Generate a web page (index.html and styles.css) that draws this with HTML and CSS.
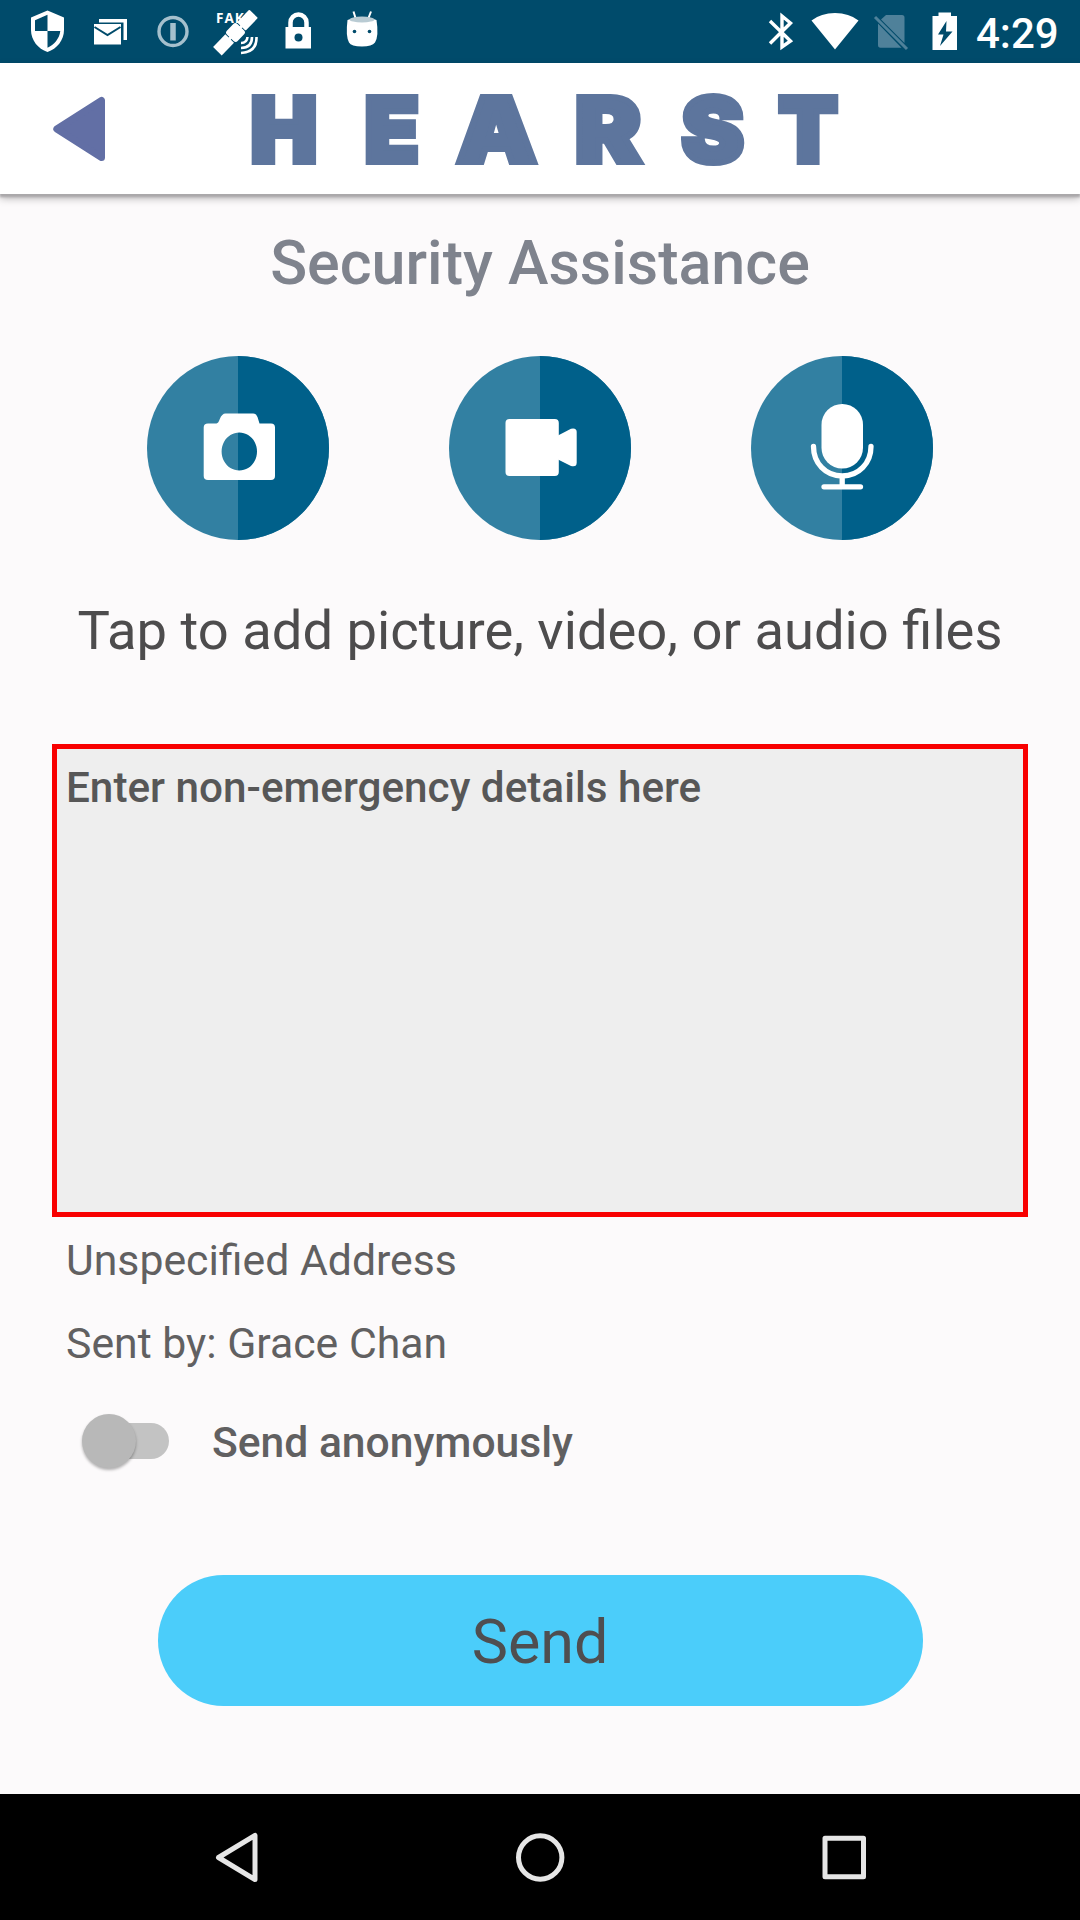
FILE: index.html
```html
<!DOCTYPE html>
<html lang="en">
<head>
<meta charset="utf-8">
<title>Security Assistance</title>
<link rel="stylesheet" href="styles.css">
</head>
<body>
<div class="screen">
  <div class="status">
    <svg class="status-icons" width="400" height="63" viewBox="0 0 400 63" fill="#fff">
      <!-- shield -->
      <path fill-rule="evenodd" d="M47.500 10.500L64 17.500V30C64 40 57 49 47.500 52C38 49 31 40 31 30V17.500ZM47.500 14.800L35 20.300V31H47.500ZM47.500 31V47.800C54 45 59.500 38.500 60.300 31Z"/>
      <!-- stacked mail -->
      <path d="M99 19H127V40H123.500V22.500H99Z"/>
      <path d="M94 24H121V44.500H94Z"/>
      <path d="M94.500 27L107.500 35L120.500 27" fill="none" stroke="#004b6b" stroke-width="2"/>
      <!-- round key badge -->
      <g fill="none" stroke="#a5c0cd"><circle cx="173" cy="31.500" r="14" stroke-width="3.400"/><path d="M173 23V40.500" stroke-width="5.500"/></g>
      <!-- satellite -->
      <text class="fake" x="216" y="23">FAKE</text>
      <g transform="translate(235.500 32.500) rotate(-46) scale(.93 1)"><rect x="-28" y="-6" width="19" height="12"/><rect x="-8" y="-7.500" width="16" height="15" rx="3"/><rect x="9" y="-6" width="19" height="12" rx="1"/><path d="M-10 -1.500H10V1.500H-10Z"/></g>
      <g fill="none" stroke="#fff" stroke-width="2.600"><path d="M241 43Q247 43 247.500 37"/><path d="M241 48Q252 48 252 37"/><path d="M241 53Q257 52 256.500 37"/></g>
      <!-- padlock -->
      <path d="M290.500 28V22.500A8 8 0 0 1 306.500 22.500V28" fill="none" stroke="#fff" stroke-width="4.500"/>
      <rect x="285.500" y="27" width="25.500" height="21.500"/><circle cx="298.500" cy="37.500" r="4" fill="#004b6b"/>
      <!-- android head -->
      <path d="M355.500 18L353.500 11.500M368.500 18L371 11.500" stroke="#fff" stroke-width="2" fill="none"/>
      <path d="M347.500 20Q362 14 376.500 20Q379 36 375 42.500Q372 46.500 362 46.500Q351 46.500 349 42.500Q345.500 36 347.500 20Z"/>
      <ellipse cx="362" cy="19.500" rx="12.500" ry="3" fill="#b9cbd3"/>
      <circle cx="354.500" cy="31.500" r="1.800" fill="#004b6b"/><circle cx="369.500" cy="31.500" r="1.800" fill="#004b6b"/>
    </svg>
    <svg class="status-icons" width="220" height="63" viewBox="750 0 220 63" fill="#fff">
      <path d="M770 21L790.500 41L782 47V16L790.500 23L770 43.500" fill="none" stroke="#fff" stroke-width="3.400"/>
      <path d="M835 49.500L811.500 20.500Q821 13 835 13Q849 13 858.500 20.500Z"/>
      <path d="M886 15H902Q904.500 15 904.500 17.500V43L881 19.500ZM878 23.500L901.500 47.700H880.500Q878 47.700 878 45Z" fill="#4f819a"/>
      <path d="M878 21L905 48" stroke="#004b6b" stroke-width="3"/>
      <path d="M875 17L907 49" stroke="#4f819a" stroke-width="3"/>
      <path fill-rule="evenodd" d="M938.500 12.500H951V16H957V50H932.500V16H938.500ZM946.500 21L938 34.500H943.500L940 46L952.500 31.500H946Z"/>
    </svg>
    <span class="clock">4:29</span>
  </div>
  <header class="header">
    <svg width="1080" height="131" viewBox="0 63 1080 131">
      <path d="M56.800 129L101.500 100.500V157.500Z" fill="#626fa5" stroke="#626fa5" stroke-width="7" stroke-linejoin="round"/>
      <g class="logo">
        <text transform="translate(250.500 162)">H</text>
        <text transform="translate(364.500 162)">E</text>
        <text transform="translate(457 162) scale(1.120 1)">A</text>
        <text transform="translate(575 162) scale(1.110 1)">R</text>
        <text transform="translate(681.500 162) scale(1.050 1)">S</text>
        <text transform="translate(778.500 162) scale(.970 1)">T</text>
      </g>
    </svg>
  </header>
  <main class="content">
    <h1 class="title">Security Assistance</h1>
    <div class="media">
      <svg width="182" height="184" viewBox="0 0 182 184">
        <ellipse cx="91" cy="92" rx="91" ry="92" fill="#3280a2"/><path d="M91 0A91 92 0 0 1 91 184Z" fill="#00608a"/>
        <path fill="#fff" fill-rule="evenodd" d="M61 67.500H69.500Q71.500 67 72.800 63Q75 57.500 78.500 57.500H106Q109 57.500 110.500 61L112.500 67.500H124Q128 67.500 128 71.500V120Q128 124 124 124H61Q56.700 124 56.700 120V71.500Q56.700 67.500 61 67.500ZM92.300 76.500A17.700 19 0 1 0 92.310 76.500Z"/>
      </svg>
      <svg width="182" height="184" viewBox="0 0 182 184">
        <ellipse cx="91" cy="92" rx="91" ry="92" fill="#3280a2"/><path d="M91 0A91 92 0 0 1 91 184Z" fill="#00608a"/>
        <rect x="56.500" y="63" width="53.300" height="57" rx="4" fill="#fff"/>
        <path fill="#fff" d="M109 79.500L122 72.700Q127.700 71.500 127.700 76V106.500Q127.700 111.500 122 110L109 103.500Z"/>
      </svg>
      <svg width="182" height="184" viewBox="0 0 182 184">
        <ellipse cx="91" cy="92" rx="91" ry="92" fill="#3280a2"/><path d="M91 0A91 92 0 0 1 91 184Z" fill="#00608a"/>
        <rect x="70.500" y="48" width="41.500" height="64.500" rx="20.700" fill="#fff"/>
        <path d="M62.500 90.500C62.500 107 74.500 120 91.200 120S120 107 120 90.500M91.200 120V130.500M73 130.800H109.500" fill="none" stroke="#fff" stroke-width="5.300" stroke-linecap="round"/>
      </svg>
    </div>
    <p class="hint">Tap to add picture, video, or audio files</p>
    <div class="details">Enter non-emergency details here</div>
    <p class="info">Unspecified Address</p>
    <p class="info">Sent by: Grace Chan</p>
    <div class="anon"><span class="switch"><span class="thumb"></span></span><span class="anon-label">Send anonymously</span></div>
    <div class="send">Send</div>
  </main>
  <nav class="nav">
    <svg width="1080" height="126" viewBox="0 1794 1080 126" fill="none" stroke="#e6e6e6" stroke-width="5" stroke-linejoin="round">
      <path d="M218.500 1857.500L255 1835.500V1879.500Z"/>
      <circle cx="540.200" cy="1857.500" r="21.700"/>
      <rect x="825" y="1838.200" width="38.500" height="38.500"/>
    </svg>
  </nav>
</div>
</body>
</html>
```
FILE: styles.css
```css
* { box-sizing: border-box; margin: 0; padding: 0; }
body { background: #fcfafb; font-family: Roboto, "Liberation Sans", sans-serif; }
svg { display: block; }
.screen { width: 1080px; height: 1920px; display: flex; flex-direction: column; overflow: hidden; }
.status { height: 63px; background: #004b6b; display: flex; color: #fff; }
.status-icons { flex: none; }
.status-icons + .status-icons { margin-left: 350px; }
.clock { font-size: 42px; font-weight: 500; line-height: 49px; padding: 9px 0 0 6px; }
.fake { font: 700 13.500px "Open Sans", sans-serif; letter-spacing: 1px; }
.header { height: 131px; background: #fff; box-shadow: 0 3px 2px #aaa8aa, 0 4px 8px rgba(0, 0, 0, .3); z-index: 1; }
.logo { fill: #5d759d; stroke: #5d759d; stroke-width: 6px; font: 900 89px Inter, sans-serif; }
.content { flex: 1; display: flex; flex-direction: column; }
.title { margin-top: 33px; height: 72px; line-height: 73px; font-size: 61px; font-weight: 500; color: #7f838d; text-align: center; }
.media { margin-top: 57px; padding: 0 147px; display: flex; justify-content: space-between; }
.hint { margin-top: 59px; height: 64px; line-height: 64px; font-size: 54.350px; color: #4d4c4d; text-align: center; white-space: nowrap; }
.details { margin: 81px 52px 0; height: 473px; border: 5px solid #f80000; background: #eee; padding: 14px 9px; line-height: 50px; font-size: 42.250px; font-weight: 500; color: #575757; }
.info { padding-left: 66px; height: 50px; line-height: 50px; margin-top: 18px; font-size: 42.750px; color: #616061; }
.info + .info { margin-top: 33px; }
.anon { margin-top: 48px; height: 50px; padding-left: 85px; display: flex; align-items: center; }
.switch { width: 84px; height: 36px; border-radius: 18px; background: #c3c3c3; display: flex; align-items: center; }
.thumb { flex: none; width: 54px; height: 54px; margin-left: -3px; border-radius: 50%; background: #b8b8b8; box-shadow: 0 2px 3px rgba(0, 0, 0, .3); }
.anon-label { margin-left: 43px; padding-top: 1px; font-size: 42.600px; font-weight: 500; color: #616061; line-height: 50px; }
.send { margin: 109px 157.500px 0; height: 131px; border-radius: 66px; background: #4bcdfa; color: #4f4e50; font-size: 61px; line-height: 135px; text-align: center; }
.nav { height: 126px; background: #000; }
```
